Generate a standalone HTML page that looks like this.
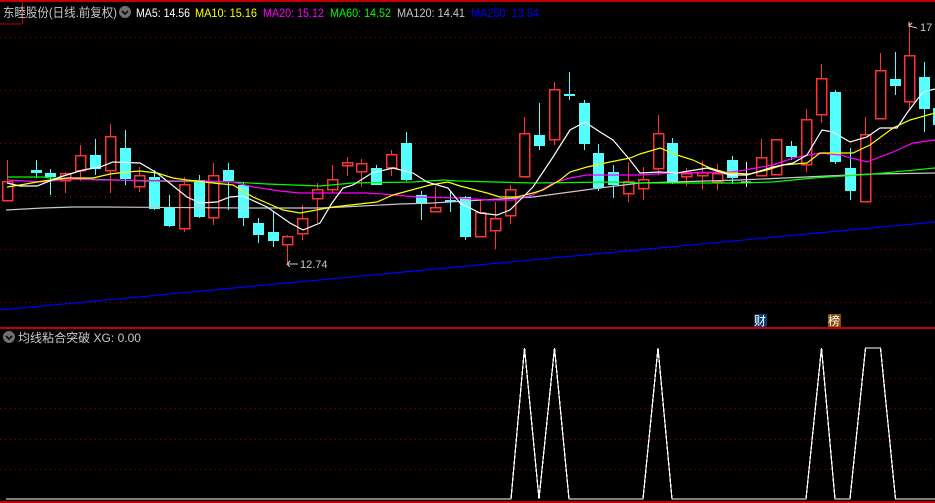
<!DOCTYPE html>
<html><head><meta charset="utf-8"><style>
html,body{margin:0;padding:0;background:#000;width:935px;height:503px;overflow:hidden}
svg{display:block}
text{font-family:"Liberation Sans","Noto Sans CJK SC",sans-serif}
</style></head><body>
<svg id="s" width="935" height="503" viewBox="0 0 935 503" xmlns="http://www.w3.org/2000/svg" shape-rendering="crispEdges">
<rect width="935" height="503" fill="#000"/>
<line x1="0" y1="1" x2="935" y2="1" stroke="#c00000" stroke-width="2"/>
<line x1="0" y1="24" x2="22" y2="24" stroke="#c00000"/>
<line x1="22.5" y1="0" x2="22.5" y2="24" stroke="#c00000"/>
<g stroke="#a00000" stroke-dasharray="1,4">
<line x1="0" y1="37.5" x2="935" y2="37.5"/><line x1="0" y1="90.5" x2="935" y2="90.5"/>
<line x1="0" y1="143.5" x2="935" y2="143.5"/><line x1="0" y1="196.5" x2="935" y2="196.5"/>
<line x1="0" y1="249.5" x2="935" y2="249.5"/><line x1="0" y1="302.5" x2="935" y2="302.5"/>
<line x1="0" y1="378.5" x2="935" y2="378.5"/><line x1="0" y1="408.5" x2="935" y2="408.5"/>
<line x1="0" y1="439.5" x2="935" y2="439.5"/><line x1="0" y1="469.5" x2="935" y2="469.5"/>
</g>
<g id="c"></g>
<g id="m" fill="none" stroke-width="1.2" shape-rendering="auto"></g>
<line x1="0" y1="328" x2="935" y2="328" stroke="#c00000" stroke-width="2"/>
<line x1="0" y1="502" x2="935" y2="502" stroke="#c00000" stroke-width="2"/>
<polyline fill="none" stroke="#fff" stroke-width="1.3" points="6,499 511,499 524.5,348 539,499 554.5,348 569,499 643,499 658,348 672,499 806,499 821.5,348 835,499 850,499 865.5,348 880.5,348 895.5,499 935,499"/>
<text x="3" y="17" font-size="12.5" fill="#c8c8c8" textLength="114" lengthAdjust="spacingAndGlyphs">东睦股份(日线.前复权)</text>
<circle cx="125" cy="12" r="6" fill="#707070"/>
<path d="M122 11 L125 14 L128 11" stroke="#111" stroke-width="1.5" fill="none"/>
<text x="136" y="17" font-size="12" fill="#fff" textLength="54" lengthAdjust="spacingAndGlyphs">MA5: 14.56</text>
<text x="195" y="17" font-size="12" fill="#ffff00" textLength="62" lengthAdjust="spacingAndGlyphs">MA10: 15.16</text>
<text x="263" y="17" font-size="12" fill="#ff00ff" textLength="61" lengthAdjust="spacingAndGlyphs">MA20: 15.12</text>
<text x="330" y="17" font-size="12" fill="#00ff00" textLength="61" lengthAdjust="spacingAndGlyphs">MA60: 14.52</text>
<text x="397" y="17" font-size="12" fill="#c8c8c8" textLength="68" lengthAdjust="spacingAndGlyphs">MA120: 14.41</text>
<text x="471" y="17" font-size="12" fill="#0000ff" textLength="68" lengthAdjust="spacingAndGlyphs">MA250: 13.54</text>
<circle cx="9" cy="337" r="6" fill="#707070"/>
<path d="M6 336 L9 339 L12 336" stroke="#111" stroke-width="1.5" fill="none"/>
<text x="18" y="342" font-size="12" fill="#c8c8c8" textLength="123" lengthAdjust="spacingAndGlyphs">均线粘合突破 XG: 0.00</text>
<text x="300" y="268" font-size="11" fill="#c8c8c8">12.74</text>
<path d="M287 264 L298 264 M287 264 L290 261 M287 264 L290 267" stroke="#c8c8c8" fill="none"/>
<text x="920" y="31" font-size="11" fill="#c8c8c8">17</text>
<path d="M909 26 L917 28 M909 22 L909 26 L912 23" stroke="#c8c8c8" fill="none"/>
<rect x="754" y="314" width="13" height="13" fill="#0a3a6e"/>
<text x="754" y="325" font-size="12" fill="#fff">财</text>
<rect x="828" y="314" width="13" height="13" fill="#8a4a0a"/>
<text x="828" y="325" font-size="12" fill="#fff">榜</text>
</svg>
<script>
var C=[
[2,181,200,160,200,'r'],[31,170,173,160,178,'c'],[45,173,177,169,195,'c'],[60,173,180,172,193,'r'],
[75,155,170,145,181,'r'],[90,155,169,139,175,'c'],[105,136,170,124,193,'r'],[120,148,179,130,185,'c'],
[134,175,186,167,192,'r'],[149,177,209,170,210,'c'],[164,207,226,195,227,'c'],[179,184,228,177,232,'r'],
[194,180,217,175,218,'c'],[208,175,217,163,225,'r'],[223,170,181,163,210,'c'],[238,185,218,182,226,'c'],
[253,223,235,218,243,'c'],[268,232,241,212,247,'c'],[282,236,244,235,263,'r'],[297,218,233,205,240,'r'],
[312,189,198,183,223,'r'],[327,179,189,165,193,'r'],[342,162,165,157,176,'r'],[356,163,171,159,187,'r'],
[371,168,185,165,185,'c'],[386,154,167,150,176,'r'],[401,143,180,132,181,'c'],[416,195,204,191,220,'c'],
[430,207,211,186,212,'r'],[445,200,202,191,212,'c'],[460,197,237,196,240,'c'],[475,212,236,199,236,'r'],
[490,218,230,202,249,'r'],[505,189,215,185,224,'r'],[519,133,176,117,177,'r'],[534,135,146,103,150,'c'],
[549,89,139,82,145,'r'],[564,94,96,72,100,'c'],[579,103,144,100,150,'c'],[593,153,188,144,191,'c'],
[608,172,185,165,198,'c'],[623,181,193,162,202,'r'],[638,179,188,167,200,'r'],[653,133,168,115,175,'r'],
[667,143,183,138,184,'c'],[681,173,176,168,186,'r'],[697,172,175,161,190,'r'],[712,173,181,164,190,'r'],
[727,160,178,156,184,'c'],[741,182,183,162,187,'w'],[756,157,175,139,176,'r'],[771,139,174,139,174,'r'],
[786,146,157,141,160,'c'],[801,119,164,109,172,'r'],[816,78,114,64,123,'r'],[830,92,162,90,164,'c'],
[845,168,191,148,200,'c'],[860,134,201,117,201,'r'],[875,70,118,53,118,'r'],[890,79,86,52,95,'c'],
[904,55,101,22,110,'r'],[919,77,109,62,132,'c'],[933,108,125,100,130,'c']];
var g=document.getElementById('c'),h='';
C.forEach(function(k){var x=k[0],w=10,col=k[5]=='r'?'#ff3232':k[5]=='c'?'#54ffff':'#ffffff',cx=x+w/2+0.5;
h+='<line x1="'+cx+'" y1="'+k[3]+'" x2="'+cx+'" y2="'+k[1]+'" stroke="'+col+'"/>';
h+='<line x1="'+cx+'" y1="'+k[2]+'" x2="'+cx+'" y2="'+k[4]+'" stroke="'+col+'"/>';
if(k[5]=='r')h+='<rect x="'+(x+0.5)+'" y="'+(k[1]+0.5)+'" width="'+w+'" height="'+(k[2]-k[1])+'" fill="#000" stroke="'+col+'" stroke-width="1.5"/>';
else if(k[5]=='c')h+='<rect x="'+x+'" y="'+k[1]+'" width="'+(w+1)+'" height="'+Math.max(2,k[2]-k[1])+'" fill="'+col+'"/>';
else h+='<line x1="'+x+'" y1="'+k[1]+'" x2="'+(x+w)+'" y2="'+k[1]+'" stroke="'+col+'"/>';});
g.innerHTML=h;
var L={
'#0000ff':'0,310 935,222',
'#c8c8c8':'6,210 43,208 73,207 103,207 250,208 320,208 343,207 400,204 433,203 533,197 600,188 640,183 740,180 827,176 873,174 935,173',
'#00ff00':'7,177 43,177 50,178 83,179 147,181 233,182 267,184 320,186 353,183 413,182 443,180 457,181 533,183 613,182 640,183 740,183 773,182 813,178 873,174 935,168',
'#ff00ff':'7,180 43,182 67,179 100,180 200,181 233,182 253,187 280,191 300,193 367,193 383,194 417,197 460,198 487,200 513,200 533,195 553,183 570,178 587,175 640,175 673,173 733,172 773,165 793,158 820,153 840,155 867,162 893,152 913,143 935,140',
'#ffff00':'7,187 20,185 43,181 67,178 93,178 110,174 127,172 140,171 157,173 173,178 187,180 213,183 233,185 253,197 267,203 283,210 300,213 333,207 377,202 393,195 430,185 448,182 460,186 487,193 500,197 517,197 533,193 543,190 560,180 570,172 587,167 610,162 630,158 640,154 660,148 677,155 693,160 710,168 727,173 750,174 767,170 783,165 807,163 820,153 853,153 870,145 893,128 910,120 935,113',
'#ffffff':'7,183 20,186 37,186 60,177 83,170 100,167 113,162 140,163 157,173 187,197 200,203 217,202 230,197 243,196 267,207 290,223 303,230 320,223 332,203 343,188 353,185 372,173 393,168 413,173 427,182 448,188 460,203 480,213 497,215 510,210 533,187 553,157 570,130 585,122 600,132 613,140 630,160 640,173 660,172 677,173 707,168 720,172 730,175 747,175 773,167 793,163 807,155 822,130 833,132 850,142 867,137 880,128 897,128 907,113 923,92 935,89'};
var m=document.getElementById('m'),s='';for(var k in L)s+='<polyline points="'+L[k]+'" stroke="'+k+'"/>';m.innerHTML=s;
</script>
</body></html>
